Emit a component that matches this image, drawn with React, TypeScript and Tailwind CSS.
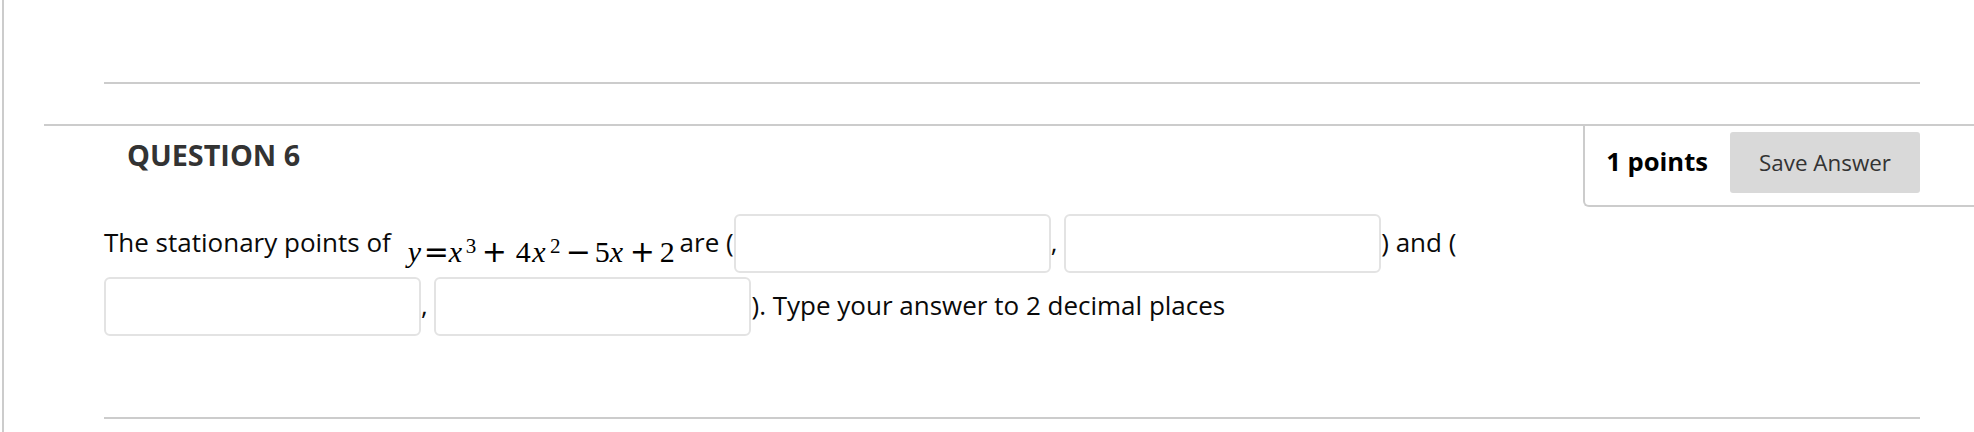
import type { ReactNode } from 'react';

/* ─── Math glyphs — fixed boxes so the formula sits where the reference has it ─── */

function G({
  children,
  w,
  ml = 0,
  italic = false,
  op = false,
}: {
  children: ReactNode;
  w: number;
  ml?: number;
  italic?: boolean;
  op?: boolean;
}) {
  return (
    <span
      className={`inline-block text-center ${italic ? 'italic' : ''} ${
        op ? "font-['DejaVu_Sans',sans-serif] text-[30px]" : 'text-[30px]'
      }`}
      style={{ width: w, marginLeft: ml }}
    >
      {children}
    </span>
  );
}

function Sup({ children, w, ml = 0 }: { children: ReactNode; w: number; ml?: number }) {
  return (
    <span className="inline-block text-center align-[9px] text-[21px]" style={{ width: w, marginLeft: ml }}>
      {children}
    </span>
  );
}

function Formula() {
  return (
    <span className="font-['Liberation_Serif',serif] leading-none align-[-10px] text-black">
      <G w={15} ml={16} italic>
        y
      </G>
      <G w={22} ml={2} op>
        =
      </G>
      <G w={17} ml={1} italic>
        x
      </G>
      <Sup w={8} ml={2}>
        3
      </Sup>
      <G w={25} ml={8} op>
        +
      </G>
      <G w={15} ml={9}>
        4
      </G>
      <G w={16} italic>
        x
      </G>
      <Sup w={11} ml={3}>
        2
      </Sup>
      <G w={17} ml={5} op>
        −
      </G>
      <G w={13} ml={12}>
        5
      </G>
      <G w={17} italic>
        x
      </G>
      <G w={23} ml={5} op>
        +
      </G>
      <G w={13} ml={7}>
        2
      </G>
    </span>
  );
}

/* ─── Answer blank ──────────────────────────────────────────────── */

function Blank() {
  return (
    <span className="my-[2px] inline-block h-[59px] w-[317px] rounded-[6px] border-2 border-[#e3e3e3] bg-white align-[-23px]" />
  );
}

/* ─── Page ──────────────────────────────────────────────────────── */

export default function App() {
  return (
    <div className="h-[432px] w-[1974px] overflow-hidden bg-white pl-[2px] font-['Open_Sans',sans-serif]">
      <div className="h-full border-l-2 border-[#cccccc] pt-[82px]">
        <div className="ml-[100px] h-[2px] w-[1816px] bg-[#cccccc]" />

        <div className="ml-[40px] mt-[40px] border-t-2 border-[#cccccc]">
          <div className="flex items-start justify-between">
            <h2 className="pl-[83px] pt-[15px] text-[28.8px] font-bold leading-none text-[#333333]">QUESTION 6</h2>

            <div className="flex items-center gap-[22px] rounded-bl-[6px] border-b-2 border-l-2 border-[#cccccc] pb-[12px] pl-[21px] pr-[54px] pt-[6px]">
              <span className="text-[25.6px] font-bold text-black">1 points</span>
              <button className="h-[61px] w-[190px] rounded-[3px] bg-[#d9d9d9] text-[22.4px] text-[#333333]">
                Save Answer
              </button>
            </div>
          </div>

          <div className="mt-[5px] pl-[60px] text-[26px] text-[#0a0a0a]">
            The stationary points of
            <Formula /> are (<Blank />, <Blank />) and (
            <br />
            <Blank />, <Blank />
            ). Type your answer to 2 decimal places
          </div>
        </div>

        <div className="ml-[100px] mt-[79px] h-[2px] w-[1816px] bg-[#cccccc]" />
      </div>
    </div>
  );
}
